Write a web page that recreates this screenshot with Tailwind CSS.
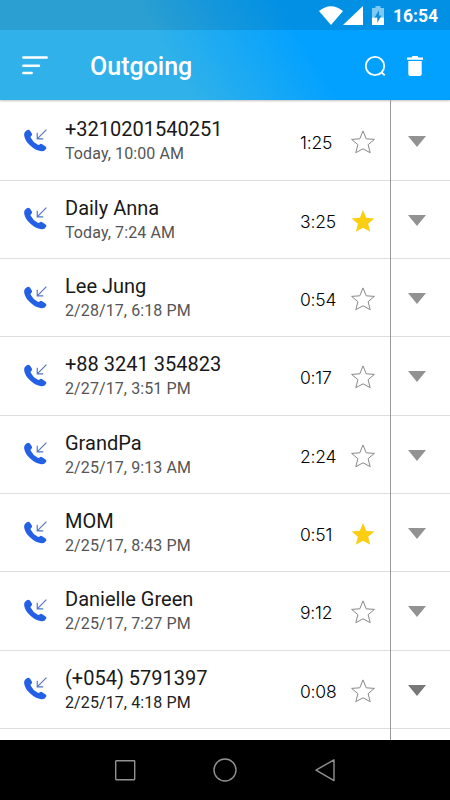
<!DOCTYPE html>
<html lang="en">
<head>
  <meta charset="UTF-8" />
  <title>Outgoing</title>
  <meta name="viewport" content="width=device-width, initial-scale=1.0" />
  <script src="https://cdn.jsdelivr.net/npm/@tailwindcss/browser@4"></script>
</head>
<body class="h-[800px] w-[450px] overflow-hidden flex flex-col bg-white font-['Roboto',sans-serif]">

  <header class="h-[100px] shrink-0 text-white bg-linear-[58deg,#30b1e9_38%,#03a1ff_66%] shadow-[0_1px_2px_#00000040]">
    <div class="h-[30px] pt-px bg-black/10 flex items-center justify-end pr-3">
      <svg class="w-6 h-[19px]" viewBox="0 0 24 19" fill="currentColor"><path d="M0 5Q12-4.500 24 5L12 19Z" /></svg>
      <svg class="w-5 h-[19px]" viewBox="0 0 20 19" fill="currentColor"><path d="M0 19 20 0V19Z" /></svg>
      <svg class="w-3 h-[19px] ml-[9px]" viewBox="0 0 12 20" preserveAspectRatio="none" fill="currentColor">
        <path opacity=".5" d="M3.500 0h5v2H12v10H0V2h3.500Z" />
        <path d="M0 12h12v8H0Z" />
        <path fill="#0b8edd" d="M7 4.500 2.500 12H5.300v5.500L9.500 10H7Z" />
      </svg>
      <span class="ml-[9px] text-[17.5px] font-bold leading-5">16:54</span>
    </div>
    <div class="h-[70px] flex items-center pl-[22px] pr-[27px]">
      <svg class="w-[26px] h-5" viewBox="0 0 26 20" stroke="currentColor" stroke-width="2.4" stroke-linecap="round"><path d="M1.300 2.500h23.400M1.300 10.800h15.700M1.300 18h8.400" /></svg>
      <h1 class="ml-[42px] mt-[3px] text-[25px] font-medium">Outgoing</h1>
      <svg class="ml-auto mt-0.5 w-[22px] h-[22px]" viewBox="0 0 22 22" fill="none" stroke="currentColor" stroke-width="1.8"><circle cx="11" cy="11" r="9.200" /><path d="m17.200 17 3.500 3.400" /></svg>
      <svg class="ml-[21px] mt-0.5 w-4 h-5" viewBox="0 0 16 20" fill="currentColor"><path d="M0 1.500h4.500L5.500 0h5l1 1.500H16v2.300H0ZM1.300 4.900h13.400V18q0 2-2 2H3.300q-2 0-2-2Z" /></svg>
    </div>
  </header>

  <main class="flex-1 min-h-0 overflow-hidden">
    <div id="calls" class="w-full"></div>
  </main>

  <nav class="h-[60px] shrink-0 bg-black flex items-center justify-center gap-[76px] text-[#929292]">
    <svg class="w-6 h-6" viewBox="0 0 24 24" fill="none" stroke="currentColor" stroke-width="1.4"><rect x="2.700" y="2.700" width="19" height="19" rx=".6" /></svg>
    <svg class="w-6 h-6" viewBox="0 0 24 24" fill="none" stroke="currentColor" stroke-width="1.4"><circle cx="12" cy="12" r="11" /></svg>
    <svg class="w-6 h-6" viewBox="0 0 24 24" fill="none" stroke="currentColor" stroke-width="1.4" stroke-linejoin="round"><path d="M21 1.800v20.800L3 12.200Z" /></svg>
  </nav>

  <script>
    const calls = [
      ["+3210201540251", "Today, 10:00 AM", "1:25", false],
      ["Daily Anna", "Today, 7:24 AM", "3:25", true],
      ["Lee Jung", "2/28/17, 6:18 PM", "0:54", false],
      ["+88 3241 354823", "2/27/17, 3:51 PM", "0:17", false],
      ["GrandPa", "2/25/17, 9:13 AM", "2:24", false],
      ["MOM", "2/25/17, 8:43 PM", "0:51", true],
      ["Danielle Green", "2/25/17, 7:27 PM", "9:12", false],
      ["(+054) 5791397", "2/25/17, 4:18 PM", "0:08", false],
    ];

    const row = ([name, date, duration, starred], i) => `
      <div class="h-[78.35px] flex border-b border-[#dedede]">
        <div class="flex-1 flex items-center pl-6">
          <svg class="w-[23px] h-[23px] -mt-px" viewBox="0 0 24 24" fill="none">
            <path fill="#2460e5" d="M1.100 2.800 3 1.300Q5 0 6.300 1.700L8 4.400Q9 6 7.700 7.100Q6.600 8 7 9.200Q9.500 14 14 16.300Q15.300 17 16.300 16.100Q17.500 15 19 15.900L22.500 18.200Q24 19.300 22.900 20.900Q21.500 23.500 18 23.200Q12 22.500 6.500 17.300Q1 12 .3 7.200Q-.2 4.300 1.100 2.800Z" />
            <path stroke="#5274c4" stroke-width="1.2" d="M23.400.7 13.800 10.300M13.800 4v6.300h6.300" />
          </svg>
          <div class="ml-[18px] w-[235px] mt-[2px]">
            <div class="text-[20px] leading-6 text-[#191919]">${name}</div>
            <div class="mt-px text-[16px] leading-6 tracking-[0.1px] ${i == 7 ? "text-[#222]" : "text-[#555]"}">${date}</div>
          </div>
          <div class="w-[51px] mt-[5px] text-[17.5px] tracking-[-0.2px] font-light text-black font-['Inter',sans-serif]">${duration}</div>
          <svg class="w-6 h-6 mt-[3px]" viewBox="0 0 24 24">
            <path d="m12 .9 3.200 7.900 8.200.6-6.300 5.300 2.100 8L12 18.800l-7.200 3.900 2.100-8L.6 9.400l8.200-.6Z" class="${starred ? "fill-[#fcce12]" : "fill-none stroke-[#888]"}" />
          </svg>
        </div>
        <div class="w-[60px] border-l border-[#999] -mb-px flex items-center pl-[17px]">
          <svg class="w-[18px] h-[11px] mt-px ${i == 7 ? "text-[#777]" : "text-[#929292]"}" viewBox="0 0 18 11" fill="currentColor"><path d="M0 0h18L9 11Z" /></svg>
        </div>
      </div>`;

    // the divider starts at the header and runs on below the last call
    document.getElementById("calls").innerHTML =
      `<div class="flex justify-end"><div class="w-[60px] h-[2.2px] border-l border-[#999]"></div></div>` +
      calls.map(row).join("") +
      `<div class="flex justify-end"><div class="w-[60px] h-3 border-l border-[#999]"></div></div>`;
  </script>
</body>
</html>
